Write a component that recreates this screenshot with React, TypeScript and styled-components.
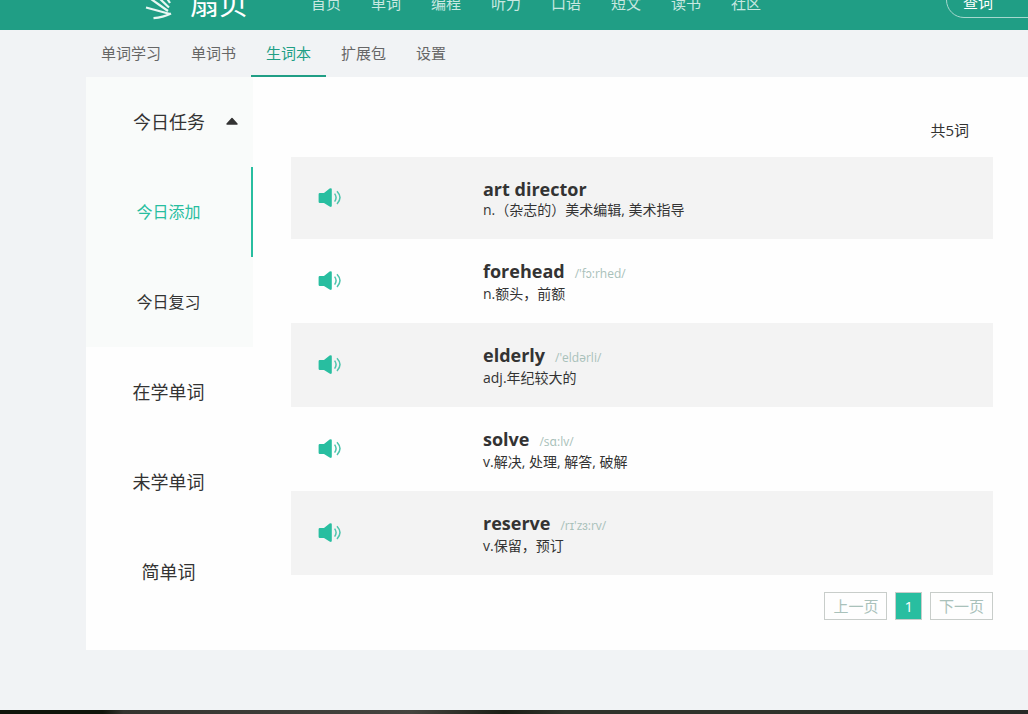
import React from "react";
import styled, { createGlobalStyle } from "styled-components";

const GlobalStyle = createGlobalStyle`
  *, *::before, *::after { box-sizing: border-box; }
  html, body, #root { height: 100%; }
  body {
    margin: 0;
    background: #f1f3f5;
    color: #333;
    font-family: "Open Sans", "Noto Sans CJK SC", sans-serif;
    overflow-x: hidden;
  }
  a { color: inherit; text-decoration: none; }
  button { font-family: inherit; padding: 0; border: 0; background: none; cursor: pointer; }
  ul { list-style: none; margin: 0; padding: 0; }
`;

const Page = styled.div`
  min-height: 100%;
  display: flex;
  flex-direction: column;
`;

const Header = styled.header`
  height: 30px;
  flex: none;
  overflow: hidden;
  display: flex;
  align-items: flex-end;
  padding-left: 144px;
  background: #209e85;
  color: #fff;
`;

const Logo = styled.a`
  flex: none;
  display: flex;
  align-items: flex-end;
  width: 167px;
  height: 60px;
`;

const LogoMark = styled.svg`
  width: 32px;
  height: 60px;
  display: block;
`;

const LogoText = styled.span`
  margin-left: 14px;
  padding-bottom: 8px;
  font-size: 29px;
  line-height: 36px;
  font-weight: 400;
`;

const MainNav = styled.nav`
  display: flex;
  gap: 30px;
  padding-bottom: 16px;
  font-size: 15px;
  line-height: 22px;
  color: #c8e8e1;
  white-space: nowrap;
`;

const Search = styled.button`
  flex: none;
  width: 160px;
  height: 36px;
  margin: 0 -78px 12px auto;
  padding: 4px 0 0 16px;
  border: 1px solid #a6d8ce;
  border-radius: 18px;
  color: #fff;
  font-size: 15px;
  line-height: 22px;
  text-align: left;
`;

const SubNav = styled.nav`
  display: flex;
  flex: none;
  height: 47px;
  padding-left: 86px;
`;

const Tab = styled.a<{ $active?: boolean }>`
  padding: 0 15px;
  border-bottom: 2px solid ${(p) => (p.$active ? "#209e85" : "transparent")};
  color: ${(p) => (p.$active ? "#209e85" : "#666")};
  font-size: 15px;
  line-height: 47px;
`;

const Content = styled.main`
  display: flex;
  margin-left: 86px;
  background: #fefefe;
`;

const Side = styled.aside`
  flex: none;
  width: 167px;
  padding-bottom: 33px;
`;

const SideGroup = styled.div`
  background: #f9fbfa;
`;

const SideItem = styled.button<{ $sub?: boolean; $active?: boolean }>`
  display: flex;
  align-items: center;
  justify-content: center;
  width: 100%;
  height: 90px;
  padding-bottom: 3px;
  border-right: 2px solid ${(p) => (p.$active ? "#28bea0" : "transparent")};
  color: ${(p) => (p.$active ? "#28bea0" : "#333")};
  font-size: ${(p) => (p.$sub ? 16 : 18)}px;
`;

const GroupToggle = styled(SideItem)`
  justify-content: flex-start;
  gap: 21px;
  padding-left: 47px;
`;

const Panel = styled.section`
  flex: 1;
  min-width: 0;
  padding: 42px 35px 30px 38px;
`;

const Count = styled.p`
  margin: 0 24px 16px 0;
  font-size: 15px;
  line-height: 22px;
  text-align: right;
`;

const Word = styled.li`
  display: flex;
  align-items: center;
  gap: 141px;
  padding-left: 27px;
  &:nth-child(odd) { background: #f3f3f3; }
`;

const Speaker = styled.button`
  flex: none;
  display: block;
  width: 24px;
  height: 22px;
`;

const Entry = styled.div`
  padding: 21px 0 19px;
`;

const Head = styled.div<{ $tall?: boolean }>`
  display: flex;
  align-items: baseline;
  gap: 10px;
  height: ${(p) => (p.$tall ? 24 : 22)}px;
`;

const Term = styled.h2`
  margin: 0;
  font-size: 18px;
  font-weight: 700;
  line-height: 22px;
`;

const Phonetic = styled.span`
  color: #a9c1ba;
  font-size: 12px;
  line-height: 16px;
`;

const Meaning = styled.p`
  margin: 0;
  font-size: 14px;
  line-height: 20px;
`;

const Pager = styled.nav`
  display: flex;
  justify-content: flex-end;
  gap: 8px;
  padding-top: 17px;
`;

const PageButton = styled.button<{ $current?: boolean }>`
  height: 28px;
  padding: 0 8px;
  border: 1px solid #c8cdca;
  background: ${(p) => (p.$current ? "#28bea0" : "#fefefe")};
  color: ${(p) => (p.$current ? "#fff" : "#a9c1ba")};
  font-size: 15px;
  line-height: 26px;
`;

const BottomEdge = styled.footer`
  flex: none;
  height: 4px;
  margin-top: auto;
  background: linear-gradient(90deg, #10140a 0, #10140a 10%, #34342f 12%, #45443f 40%, #1b1e15 49%, #2f332b 55%, #2f332b 75%, #272a27 100%);
`;

const sections = ["首页", "单词", "编程", "听力", "口语", "短文", "读书", "社区"];
const tabs = ["单词学习", "单词书", "生词本", "扩展包", "设置"];
const words = [
  { term: "art director", phonetic: "", meaning: "n.（杂志的）美术编辑, 美术指导" },
  { term: "forehead", phonetic: "/'fɔ:rhed/", meaning: "n.额头，前额" },
  { term: "elderly", phonetic: "/'eldərli/", meaning: "adj.年纪较大的" },
  { term: "solve", phonetic: "/sɑ:lv/", meaning: "v.解决, 处理, 解答, 破解" },
  { term: "reserve", phonetic: "/rɪ'zɜ:rv/", meaning: "v.保留，预订" },
];

const SpeakerIcon = () => (
  <svg width="24" height="22" viewBox="0 0 24 22" aria-hidden="true">
    <path d="M1.8 6H6L11.6 1.6Q13.8 .4 13.8 2.6V18.6Q13.8 20.8 11.6 19.6L6 16H1.8Q.6 16 .6 14.8V7.2Q.6 6 1.8 6Z" fill="#28bea0" />
    <path d="M16.6 6.6Q19.6 10.6 16.6 14.6M19 4.2Q25 10.6 19 17" fill="none" stroke="#4fc5ae" strokeWidth="1.5" />
  </svg>
);

export default function App() {
  return (
    <Page>
      <GlobalStyle />
      <Header>
        <Logo href="#">
          <LogoMark viewBox="0 0 32 60" aria-hidden="true">
            <path
              d="M2 37.5L26 44M9.5 48.2Q19 47.5 27 43.6M7 29L24 41M14 27L25 37.5M20 24L26 33"
              fill="none" stroke="#e9f7f3" strokeWidth="2.2"
            />
          </LogoMark>
          <LogoText>扇贝</LogoText>
        </Logo>
        <MainNav>
          {sections.map((s) => <a href="#" key={s}>{s}</a>)}
        </MainNav>
        <Search>查词</Search>
      </Header>
      <SubNav>
        {tabs.map((t) => <Tab href="#" key={t} $active={t === "生词本"}>{t}</Tab>)}
      </SubNav>
      <Content>
        <Side>
          <SideGroup>
            <GroupToggle aria-expanded="true">
              今日任务
              <svg width="12" height="8" viewBox="0 0 12 8" aria-hidden="true">
                <path d="M1 7L6 1.5L11 7Z" fill="#333" stroke="#333" strokeWidth="1.4" strokeLinejoin="round" />
              </svg>
            </GroupToggle>
            <SideItem $sub $active>今日添加</SideItem>
            <SideItem $sub>今日复习</SideItem>
          </SideGroup>
          <SideItem>在学单词</SideItem>
          <SideItem>未学单词</SideItem>
          <SideItem>简单词</SideItem>
        </Side>
        <Panel>
          <Count>共5词</Count>
          <ul>
            {words.map((w) => (
              <Word key={w.term}>
                <Speaker aria-label={`播放 ${w.term}`}><SpeakerIcon /></Speaker>
                <Entry>
                  <Head $tall={!!w.phonetic}>
                    <Term>{w.term}</Term>
                    {w.phonetic && <Phonetic>{w.phonetic}</Phonetic>}
                  </Head>
                  <Meaning>{w.meaning}</Meaning>
                </Entry>
              </Word>
            ))}
          </ul>
          <Pager aria-label="分页">
            <PageButton>上一页</PageButton>
            <PageButton $current aria-current="page">1</PageButton>
            <PageButton>下一页</PageButton>
          </Pager>
        </Panel>
      </Content>
      <BottomEdge />
    </Page>
  );
}
